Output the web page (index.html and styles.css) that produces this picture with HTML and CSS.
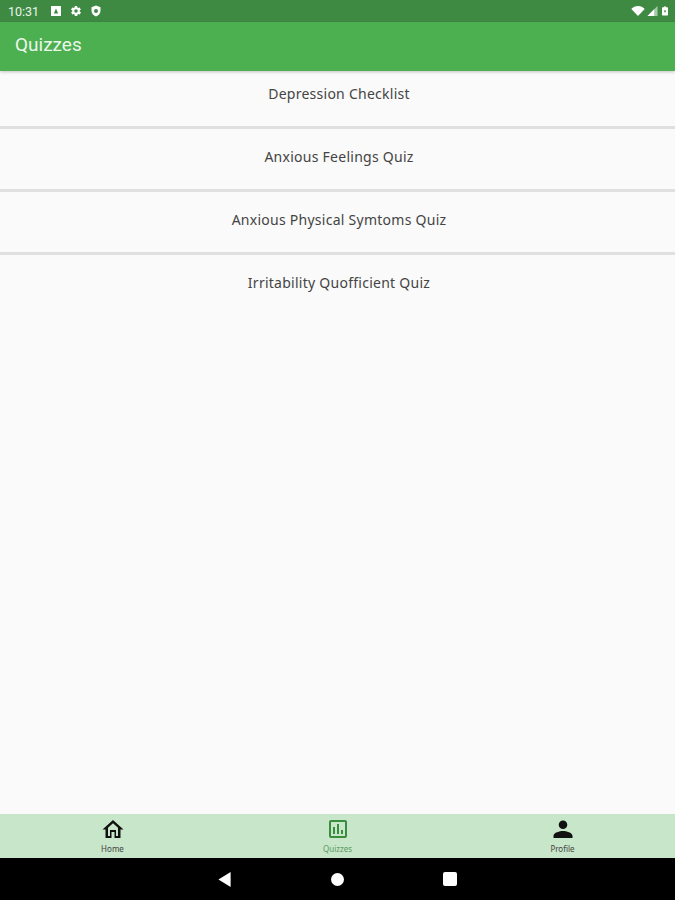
FILE: index.html
```html
<!DOCTYPE html>
<html lang="en">
<head>
<meta charset="utf-8">
<title>Quizzes</title>
<link rel="stylesheet" href="styles.css">
</head>
<body>
<div class="screen">
  <div class="status">
    <div class="status-left">
      <span class="time">10:31</span>
      <svg class="si" viewBox="0 0 12 12"><path fill="#fff" fill-rule="evenodd" d="M1.500 1h9a.5.5 0 0 1 .5.5v9a.5.5 0 0 1-.5.5h-9a.5.5 0 0 1-.5-.5v-9a.5.5 0 0 1 .5-.5zM6 3.500 3.800 8.500h4.400L6 3.500z"/></svg>
      <svg class="si" viewBox="0 0 24 24"><path fill="#fff" d="M19.400 13a7.500 7.500 0 0 0 0-2l2.100-1.600a.5.5 0 0 0 .1-.6l-2-3.500a.5.5 0 0 0-.6-.2l-2.500 1a7.400 7.400 0 0 0-1.700-1l-.4-2.700a.5.5 0 0 0-.5-.4h-4a.5.5 0 0 0-.5.4l-.4 2.700a7.400 7.400 0 0 0-1.700 1l-2.500-1a.5.5 0 0 0-.6.2l-2 3.500a.5.5 0 0 0 .1.6L4.600 11a7.500 7.500 0 0 0 0 2l-2.100 1.600a.5.5 0 0 0-.1.6l2 3.500c.1.2.4.3.6.2l2.500-1c.5.4 1.100.8 1.700 1l.4 2.700c0 .2.2.4.5.4h4c.3 0 .5-.2.5-.4l.4-2.700c.6-.2 1.200-.6 1.700-1l2.500 1c.2.1.5 0 .6-.2l2-3.500a.5.5 0 0 0-.1-.6L19.400 13zM12 15.500a3.500 3.500 0 1 1 0-7 3.500 3.500 0 0 1 0 7z"/></svg>
      <svg class="si" viewBox="0 0 24 24"><path fill="#fff" fill-rule="evenodd" d="M12 1 3 4.500v6.600c0 5.500 3.800 10.300 9 11.900 5.200-1.600 9-6.400 9-11.900V4.500L12 1zm0 7a4 4 0 1 1 0 8 4 4 0 0 1 0-8z"/></svg>
    </div>
    <div class="status-right">
      <svg class="wifi" viewBox="0 0 16 12"><path fill="#fff" d="M0 3.500C2 1.400 4.900 0 8 0s6 1.400 8 3.500L8 12 0 3.500z"/></svg>
      <svg class="signal" viewBox="0 0 12 12"><path fill="#fff" fill-opacity=".55" d="M12 0v12H0L12 0z"/><path fill="#fff" d="M8 4v8H0l8-8z"/></svg>
      <svg class="batt" viewBox="0 0 8 12"><path fill="#fff" fill-rule="evenodd" d="M2.500 0h3v1H7a1 1 0 0 1 1 1v9a1 1 0 0 1-1 1H1a1 1 0 0 1-1-1V2a1 1 0 0 1 1-1h1.500V0zM3 5v2.500h2V5H3z"/></svg>
    </div>
  </div>
  <header class="appbar">Quizzes</header>
  <main class="list">
    <div class="row row-first">Depression Checklist</div>
    <div class="row">Anxious Feelings Quiz</div>
    <div class="row">Anxious Physical Symtoms Quiz</div>
    <div class="row row-last">Irritability Quofficient Quiz</div>
  </main>
  <nav class="nav">
    <div class="tab">
      <svg class="tab-icon" viewBox="0 0 24 24"><path fill="#111" d="M12 3 1.500 12.500h3V21h6v-6h3v6h6v-8.500h3L12 3zm5 16h-2v-6H9v6H7v-8.200l5-4.500 5 4.500V19z"/></svg>
      <span class="tab-label">Home</span>
    </div>
    <div class="tab tab-active">
      <svg class="tab-icon" viewBox="0 0 24 24"><path fill="#388e3c" d="M19 3H5a2 2 0 0 0-2 2v14a2 2 0 0 0 2 2h14a2 2 0 0 0 2-2V5a2 2 0 0 0-2-2zm0 16H5V5h14v14zM7 10h2v7H7v-7zm4-3h2v10h-2V7zm4 6h2v4h-2v-4z"/></svg>
      <span class="tab-label">Quizzes</span>
    </div>
    <div class="tab">
      <svg class="tab-icon" viewBox="0 0 24 24"><path fill="#111" d="M12 12a4.300 4.300 0 1 0 0-8.600 4.300 4.300 0 0 0 0 8.600zm0 2c-3.200 0-9.500 1.600-9.500 4.800V21h19v-2.200c0-3.200-6.300-4.800-9.500-4.800z"/></svg>
      <span class="tab-label">Profile</span>
    </div>
  </nav>
  <div class="sysnav">
    <svg class="back" viewBox="0 0 14 16"><path fill="#fff" d="M13 0v16L0 8z"/></svg>
    <span class="home-dot"></span>
    <span class="recent"></span>
  </div>
</div>
</body>
</html>
```
FILE: styles.css
```css
html, body { margin: 0; padding: 0; }
body { font-family: "Noto Sans", "Open Sans", sans-serif; background: #fafafa; }
.screen { width: 675px; height: 900px; display: flex; flex-direction: column; overflow: hidden; }
.status { height: 22px; flex: none; background: #3f8a43; display: flex; align-items: center; justify-content: space-between; padding: 0 7px 0 8px; box-sizing: border-box; color: #e8f5e9; }
.status-left, .status-right { display: flex; align-items: center; }
.time { font-family: Roboto, sans-serif; font-size: 12.500px; margin-right: 12px; width: 30px; }
.si { width: 12px; height: 12px; margin-right: 8px; }
.wifi { width: 14px; height: 10px; margin-right: 2px; }
.signal { width: 11px; height: 10px; margin-right: 4px; }
.batt { width: 6px; height: 10px; }
.appbar { height: 49px; flex: none; background: #4caf50; color: #eaf6ea; font-family: Roboto, sans-serif; font-size: 19px; line-height: 45px; padding-left: 15px; box-shadow: 0 1px 3px rgba(0,0,0,.22); position: relative; box-sizing: border-box; }
.list { flex: 1; background: #fafafa; }
.row { height: 63px; box-sizing: border-box; border-bottom: 3px solid #e0e0e0; padding-left: 3px; text-align: center; font-size: 14px; letter-spacing: .26px; line-height: 56px; color: #444; }
.row-first { height: 58px; line-height: 45px; }
.row-last { border-bottom: 0; }
.nav { height: 44px; flex: none; background: #c8e6c9; display: grid; grid-template-columns: repeat(3, 1fr); }
.tab { display: flex; flex-direction: column; align-items: center; padding-top: 3px; box-sizing: border-box; }
.tab-icon { width: 24px; height: 24px; }
.tab-label { font-size: 8px; line-height: 11px; margin-top: 2px; color: #444; }
.tab-active .tab-label { color: #5b9a60; }
.sysnav { height: 42px; flex: none; background: #000; display: flex; align-items: center; }
.back { width: 14px; height: 15px; margin-left: 218px; }
.home-dot { width: 13px; height: 13px; border-radius: 50%; background: #fff; margin-left: 99px; }
.recent { width: 14px; height: 14px; border-radius: 2px; background: #fff; margin-left: 99px; }
```
